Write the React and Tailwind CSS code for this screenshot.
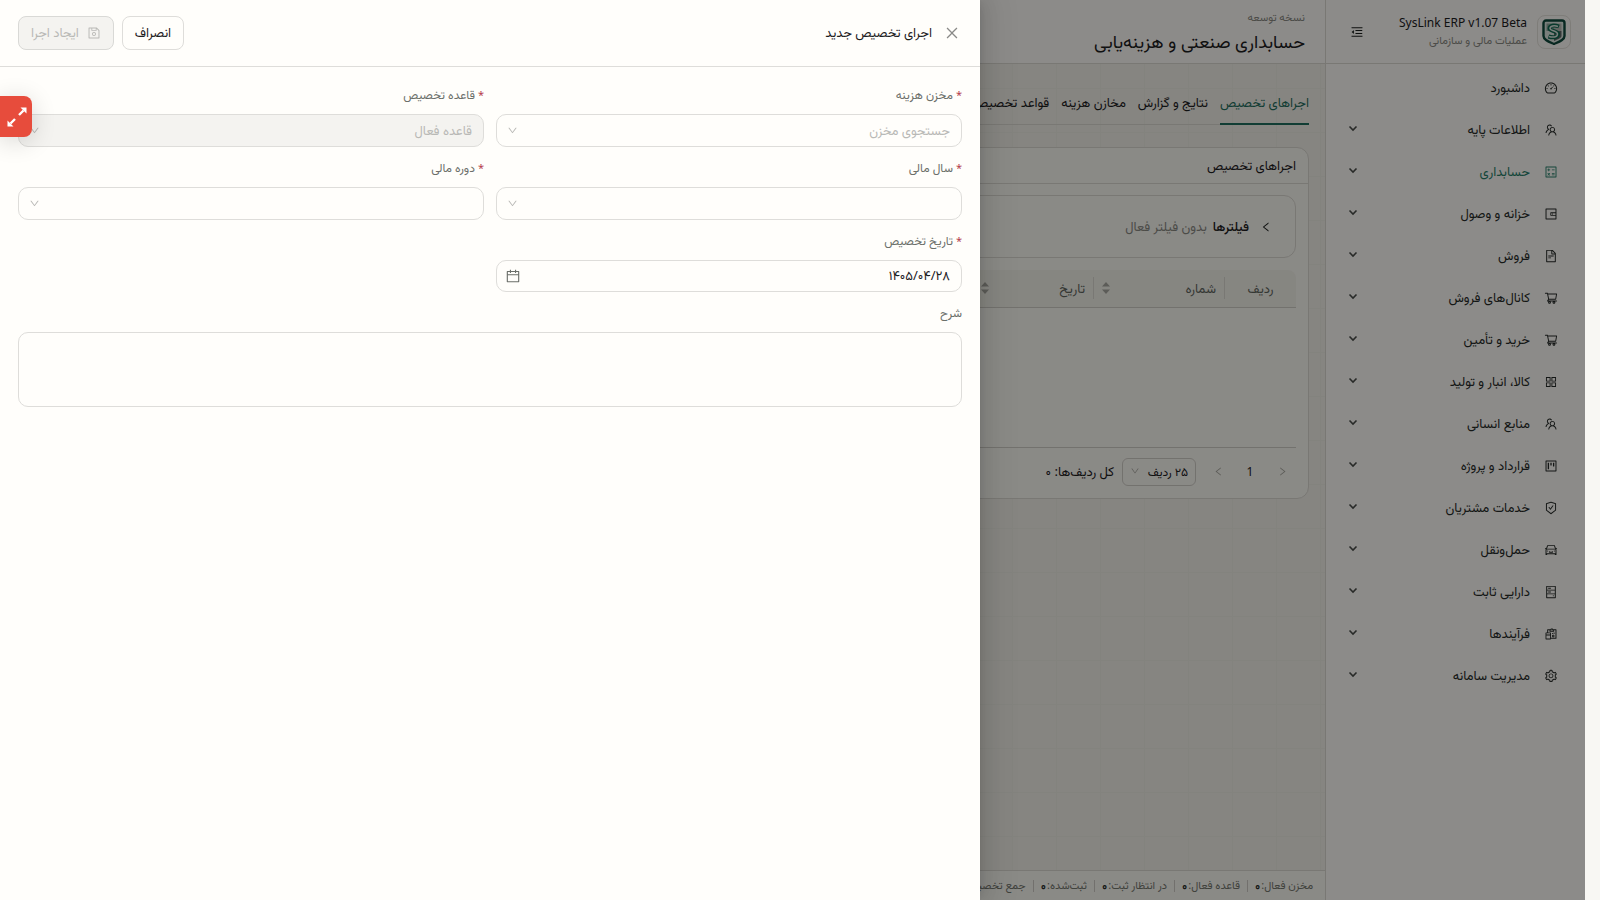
import React, { useState } from "react";
import {
  AiOutlineAppstore,
  AiOutlineCalculator,
  AiOutlineCalendar,
  AiOutlineCar,
  AiOutlineClose,
  AiOutlineDashboard,
  AiOutlineDown,
  AiOutlineFileText,
  AiOutlineHdd,
  AiOutlineLeft,
  AiOutlineMenuFold,
  AiOutlineProject,
  AiOutlineReconciliation,
  AiOutlineRight,
  AiOutlineSafetyCertificate,
  AiOutlineSave,
  AiOutlineSetting,
  AiOutlineShoppingCart,
  AiOutlineTeam,
  AiOutlineWallet,
} from "react-icons/ai";

const menuItems = [
  { label: "داشبورد", icon: AiOutlineDashboard, leaf: true },
  { label: "اطلاعات پایه", icon: AiOutlineTeam },
  { label: "حسابداری", icon: AiOutlineCalculator, active: true },
  { label: "خزانه و وصول", icon: AiOutlineWallet },
  { label: "فروش", icon: AiOutlineFileText },
  { label: "کانال‌های فروش", icon: AiOutlineShoppingCart },
  { label: "خرید و تأمین", icon: AiOutlineShoppingCart },
  { label: "کالا، انبار و تولید", icon: AiOutlineAppstore },
  { label: "منابع انسانی", icon: AiOutlineTeam },
  { label: "قرارداد و پروژه", icon: AiOutlineProject },
  { label: "خدمات مشتریان", icon: AiOutlineSafetyCertificate },
  { label: "حمل‌ونقل", icon: AiOutlineCar },
  { label: "دارایی ثابت", icon: AiOutlineHdd },
  { label: "فرآیندها", icon: AiOutlineReconciliation },
  { label: "مدیریت سامانه", icon: AiOutlineSetting },
];

const tabs = ["اجراهای تخصیص", "نتایج و گزارش", "مخازن هزینه", "قواعد تخصیص"];

const stats = ["مخزن فعال:", "قاعده فعال:", "در انتظار ثبت:", "ثبت‌شده:", "جمع تخصیص:"];

const Logo = () => (
  <svg viewBox="0 0 24 26" className="w-6 h-[26px]">
    <path
      d="M4 1.5h16a2.500 2.500 0 0 1 2.500 2.500v13c0 4-6 6-10.500 8C7.500 23 1.500 21 1.500 17V4A2.500 2.500 0 0 1 4 1.500z"
      fill="#dfe8e2"
      stroke="#0f4a3c"
      strokeWidth="2.400"
    />
    <path d="M4.500 4.500H12v7.500H4.500z" fill="#8fa69c" />
    <path d="M12 4.500h7.500V12H12z" fill="#b9bbb5" />
    <path d="M12 12h7.500v5c0 2-4 3.500-7.500 5z" fill="#5b6664" />
    <path
      d="M17 7.500C12 5.500 7.500 6.500 7.500 9.500s8.500 2 8.500 5.500-5 4-9.500 2.500"
      fill="none"
      stroke="#0f6b52"
      strokeWidth="4"
    />
    <path
      d="M16 7.500C12 6 8 7 8 9.500s7.500 2 7.500 5.500-5 3.500-8.500 2.500"
      fill="none"
      stroke="#dfe8e2"
      strokeWidth="1.500"
    />
  </svg>
);

const MenuArrow = () => (
  <svg viewBox="0 0 10 10" className="w-[10px] h-[10px] mb-1 text-[#4a4d4a]">
    <path d="M1.500 3.500 5 7l3.500-3.500" fill="none" stroke="currentColor" strokeWidth="1.600" />
  </svg>
);

const Sorter = () => (
  <svg viewBox="0 0 8 12" className="w-2 h-3 text-[#a8a8a0]">
    <path d="M4 0l4 4.500H0z" fill="currentColor" />
    <path d="M4 12l4-4.500H0z" fill="currentColor" />
  </svg>
);

const Sidebar = () => (
  <aside className="w-[260px] shrink-0 bg-[#fffdf9] border-l border-[#dcdad3]">
    <div className="h-16 flex items-center border-b border-[#dcdad3] ps-[14px] pe-6">
      <div className="w-[34px] h-[34px] rounded-lg border border-[#e6e3dc] flex items-center justify-center">
        <Logo />
      </div>
      <div className="flex-1 ps-[10px] pb-[2px]">
        <p className="text-xs leading-[18px] text-right" dir="ltr">
          SysLink ERP v1.07 Beta
        </p>
        <p className="text-[11px] leading-4 text-[#8a8a84]">عملیات مالی و سازمانی</p>
      </div>
      <button type="button" aria-label="جمع کردن منو">
        <AiOutlineMenuFold className="text-sm" />
      </button>
    </div>
    <nav>
      <ul className="pt-[3px]">
        {menuItems.map(({ label, icon: Icon, leaf, active }) => (
          <li key={label}>
            <a
              href="#"
              className={`h-[42px] flex items-center gap-[14px] ps-[27px] pe-[22px] text-[13px] ${
                active ? "text-[#26806a]" : "text-[#262a28]"
              }`}
            >
              <Icon className="text-sm" />
              <span className="flex-1">{label}</span>
              {!leaf && <MenuArrow />}
            </a>
          </li>
        ))}
      </ul>
    </nav>
  </aside>
);

const RunsCard = () => (
  <section className="mt-[22px] bg-[#fcfbf5] border border-[#dcdad3] rounded-xl">
    <h2 className="h-9 px-3 flex items-center border-b border-[#dcdad3] text-[13px]">
      اجراهای تخصیص
    </h2>
    <div className="px-3 pt-[11px] pb-3">
      <button
        type="button"
        className="w-full h-[63px] px-[23px] flex items-center rounded-xl border border-[#dcdad3] text-[13px]"
      >
        <AiOutlineLeft className="text-xs" />
        <span className="ms-[11px] font-medium">فیلترها</span>
        <span className="ms-[6px] text-[#8a8a84]">بدون فیلتر فعال</span>
      </button>
      <table className="mt-3 w-full table-fixed border-b border-[#d2d0c9] text-[13px]">
        <thead>
          <tr className="h-[37px] text-[#62665f] bg-[#f5f4ec]">
            <th className="w-[71px] font-normal rounded-tr-lg border-b border-[#d2d0c9]">ردیف</th>
            <th className="w-[131px] font-normal border-b border-[#d2d0c9]">
              <div className="h-[22px] ps-2 pe-2 flex items-center justify-between border-s border-[#dcdad3]">
                شماره <Sorter />
              </div>
            </th>
            <th className="w-[131px] font-normal border-b border-[#d2d0c9]">
              <div className="h-[22px] ps-2 pe-[18px] flex items-center justify-between border-s border-[#dcdad3]">
                تاریخ <Sorter />
              </div>
            </th>
            <th className="border-b border-[#d2d0c9]" />
          </tr>
        </thead>
        <tbody>
          <tr>
            <td colSpan={4} className="h-[140px]" />
          </tr>
        </tbody>
      </table>
      <div className="mt-[10px] flex items-center text-[13px]">
        <button type="button" aria-label="قبلی" className="w-7 flex justify-center text-[#a8a8a0]">
          <AiOutlineRight className="text-[11px]" />
        </button>
        <button type="button" className="w-9 text-xs">
          1
        </button>
        <button type="button" aria-label="بعدی" className="w-7 flex justify-center text-[#a8a8a0]">
          <AiOutlineLeft className="text-[11px]" />
        </button>
        <div className="relative ms-2 w-[74px] h-7">
          <select
            aria-label="تعداد ردیف"
            className="appearance-none w-full h-full ps-[7px] rounded-md border border-[#d2d0c9] text-xs"
          >
            <option>۲۵ ردیف</option>
          </select>
          <AiOutlineDown className="absolute left-2 top-2 text-[10px] text-[#a8a8a0]" />
        </div>
        <span className="ms-2">کل ردیف‌ها: ۰</span>
      </div>
    </div>
  </section>
);

const MainArea = () => (
  <div className="flex-1 min-w-0 flex flex-col bg-[#f4f3eb] bg-[linear-gradient(to_right,#efeee6_1px,transparent_1px),linear-gradient(to_bottom,#efeee6_1px,transparent_1px)] bg-[length:44px_44px]">
    <header className="h-16 px-5 pt-[2px] flex flex-col justify-center bg-[#fffdf9] border-b border-[#dcdad3]">
      <p className="text-[11px] leading-4 text-[#8a8a84]">نسخه توسعه</p>
      <h1 className="text-lg leading-8">حسابداری صنعتی و هزینه‌یابی</h1>
    </header>
    <main className="flex-1 px-4 pt-[17px]">
      <div role="tablist" className="flex gap-3 border-b border-[#dcdad3] text-[13px]">
        {tabs.map((tab, i) => (
          <button
            key={tab}
            type="button"
            role="tab"
            aria-selected={i === 0}
            className={`h-11 pt-[2px] -mb-px border-b-2 whitespace-nowrap ${
              i === 0 ? "border-[#1f6f5f] text-[#1f6f5f]" : "border-transparent"
            }`}
          >
            {tab}
          </button>
        ))}
      </div>
      <RunsCard />
    </main>
    <footer className="h-[30px] px-3 flex items-center bg-[#fcfbf5] border-t border-[#dcdad3] text-[11px] text-[#75786f]">
      {stats.map((stat, i) => (
        <span key={stat} className="flex items-center whitespace-nowrap">
          {i > 0 && <span className="mx-[7px] w-px h-3 bg-[#cfcdc6]" />}
          {stat} <b className="ms-px font-semibold text-xs text-[#262a28]">۰</b>
        </span>
      ))}
    </footer>
  </div>
);

const FieldLabel = ({ id, required, children }) => (
  <label htmlFor={id} className="block mb-2 text-xs leading-[22px] text-[#6b6f6a]">
    {required && <span className="text-[11px] text-[#b5404c] me-[3px]">*</span>}
    {children}
  </label>
);

const SelectField = ({ id, label, placeholder = "", disabled }) => (
  <div>
    <FieldLabel id={id} required>
      {label}
    </FieldLabel>
    <div className="relative">
      <select
        id={id}
        disabled={disabled}
        className="appearance-none block w-full h-[33px] ps-[11px] rounded-[10px] border border-[#deddda] text-[13px] text-[#b9b9b6] disabled:bg-[#f4f3f0] disabled:opacity-100"
      >
        <option>{placeholder}</option>
      </select>
      <AiOutlineDown className="absolute left-[11px] top-[11px] text-[11px] text-[#b9b9b6]" />
    </div>
  </div>
);

const NewRunDrawer = () => {
  const [date, setDate] = useState("۱۴۰۵/۰۴/۲۸");
  const [description, setDescription] = useState("");

  return (
    <div
      role="dialog"
      aria-label="اجرای تخصیص جدید"
      className="absolute inset-y-0 left-0 w-[980px] max-w-full bg-[#fffefb] shadow-[6px_0_16px_rgba(0,0,0,0.08),3px_0_6px_-4px_rgba(0,0,0,0.12),9px_0_28px_8px_rgba(0,0,0,0.05)]"
    >
      <div className="h-[67px] ps-5 pe-[18px] flex items-center border-b border-[#deddda] text-[13px]">
        <button type="button" aria-label="بستن" className="text-[#8a8a88]">
          <AiOutlineClose className="text-base" />
        </button>
        <h2 className="ms-3 flex-1">اجرای تخصیص جدید</h2>
        <button type="button" className="h-[34px] px-3 rounded-lg border border-[#deddda]">
          انصراف
        </button>
        <button
          type="button"
          disabled
          className="ms-2 h-[34px] px-3 flex items-center gap-2 rounded-lg border border-[#d9d9d6] bg-[#f4f3f0] text-[#b9b9b6]"
        >
          <AiOutlineSave className="text-sm" />
          ایجاد اجرا
        </button>
      </div>

      <form className="px-[18px] pt-[17px] grid grid-cols-2 gap-x-3 gap-y-[10px]">
        <SelectField id="pool" label="مخزن هزینه" placeholder="جستجوی مخزن" />
        <SelectField id="rule" label="قاعده تخصیص" placeholder="قاعده فعال" disabled />
        <SelectField id="year" label="سال مالی" />
        <SelectField id="period" label="دوره مالی" />
        <div>
          <FieldLabel id="date" required>
            تاریخ تخصیص
          </FieldLabel>
          <div className="h-8 ps-[11px] pe-2 flex items-center rounded-[10px] border border-[#deddda]">
            <input
              id="date"
              type="text"
              value={date}
              onChange={(e) => setDate(e.target.value)}
              className="flex-1 min-w-0 text-[13px] outline-none"
            />
            <AiOutlineCalendar className="text-base text-[#6b6f6a]" />
          </div>
        </div>
        <div className="col-span-2">
          <FieldLabel id="description">شرح</FieldLabel>
          <textarea
            id="description"
            value={description}
            onChange={(e) => setDescription(e.target.value)}
            className="block w-full h-[75px] px-3 py-1 resize-none rounded-[10px] border border-[#deddda] text-[13px]"
          />
        </div>
      </form>
    </div>
  );
};

const ExpandHandle = () => (
  <button
    type="button"
    aria-label="تمام صفحه"
    className="absolute left-0 top-24 w-8 h-[41px] pe-px flex items-center justify-center rounded-r-lg bg-[#e74c3c] text-white shadow-[0_4px_24px_rgba(0,0,0,0.16)]"
  >
    <svg viewBox="0 0 20 20" className="w-5 h-5">
      <path d="M12 8l4.500-4.500M8 12l-4.500 4.500" stroke="currentColor" strokeWidth="2.400" />
      <path d="M13.500 0.500h6v6zM0.500 13.500v6h6z" fill="currentColor" />
    </svg>
  </button>
);

const App = () => {
  return (
    <div
      dir="rtl"
      className="relative min-h-screen flex bg-[#f8f7f3] ps-[15px] overflow-hidden text-[#1c201e] font-['Noto_Sans','Vazirmatn','DejaVu_Sans',sans-serif]"
    >
      <div className="relative flex-1 min-w-0 flex">
        <Sidebar />
        <MainArea />
        <div className="absolute inset-0 bg-black/45" />
        <NewRunDrawer />
        <ExpandHandle />
      </div>
    </div>
  );
};

export default App;
